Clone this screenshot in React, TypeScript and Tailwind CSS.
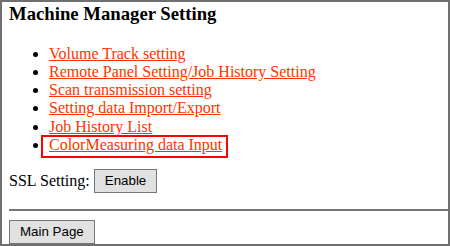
import React from 'react';

const links = [
    'Volume Track setting',
    'Remote Panel Setting/Job History Setting',
    'Scan transmission setting',
    'Setting data Import/Export',
    'Job History List',
];

const serif = { fontFamily: '"Liberation Serif", "Times New Roman", serif' };

const Button = ({ label }: { label: string }) => (
    <button className="h-[24px] px-[10px] bg-[#e1e1e1] border border-[#767676] text-[13.33px] text-black font-['Liberation_Sans',Arial,sans-serif] leading-none">
        {label}
    </button>
);

export default function App() {
    return (
        <div className="w-[450px] h-[246px] bg-white border-2 border-[#707070] pl-[7px] text-black overflow-hidden font-['Liberation_Serif','Times_New_Roman',serif]">
            <h3 className="mt-px text-[18.72px] font-bold leading-[21.5px]">Machine Manager Setting</h3>

            <ul className="mt-[20px] list-disc pl-[40px] text-[16px] leading-[18.3px]">
                {links.map((label) => (
                    <li key={label}>
                        <a href="#" className="text-[#ff3300] underline">
                            {label}
                        </a>
                    </li>
                ))}
                <li className="relative">
                    <a href="#" className="text-[#ff3300] underline">
                        ColorMeasuring data Input
                    </a>
                    <span className="absolute left-[-8px] top-[-1px] w-[187px] h-[23px] border-2 border-[#ff0000] pointer-events-none" />
                </li>
            </ul>

            <div className="mt-[14px] flex items-center gap-[4px] h-[25px]" style={serif}>
                <span className="text-[16px]">SSL Setting:</span>
                <Button label="Enable" />
            </div>

            <hr className="mt-[16px] border-0 border-t-2 border-[#777777]" />

            <div className="mt-[8px]">
                <Button label="Main Page" />
            </div>
        </div>
    );
}
